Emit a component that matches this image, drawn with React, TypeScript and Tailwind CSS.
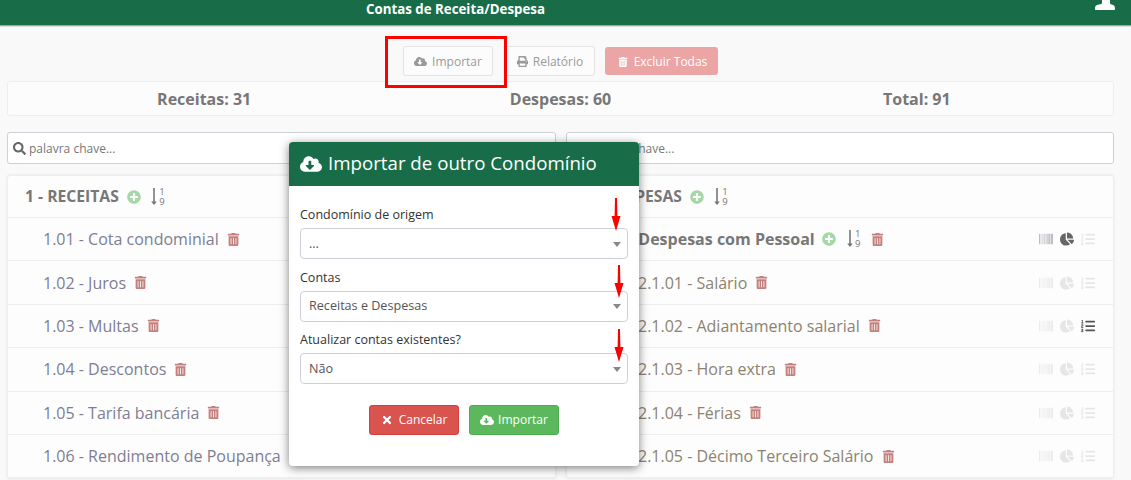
import { FaBarcode, FaChartPie, FaCloudDownloadAlt, FaListOl, FaPlusCircle, FaPrint, FaSearch, FaTimes, FaTrashAlt } from "react-icons/fa";

const receitas = [
  "1.01 - Cota condominial",
  "1.02 - Juros",
  "1.03 - Multas",
  "1.04 - Descontos",
  "1.05 - Tarifa bancária",
  "1.06 - Rendimento de Poupança",
];

const despesas = [
  "2.1.01 - Salário",
  "2.1.02 - Adiantamento salarial",
  "2.1.03 - Hora extra",
  "2.1.04 - Férias",
  "2.1.05 - Décimo Terceiro Salário",
];

function RowTools({ pie = false, list = false, bars = false }: { pie?: boolean; list?: boolean; bars?: boolean }) {
  return (
    <div className="ml-auto flex items-center gap-[7px] pr-[18px] text-[14px]">
      <FaBarcode className={bars ? "text-[#a9a5ad]" : "text-[#e6e6e6]"} />
      <FaChartPie className={pie ? "text-[#666666]" : "text-[#e6e6e6]"} />
      <FaListOl className={list ? "text-[#555555]" : "text-[#e6e6e6]"} />
    </div>
  );
}

// down arrow with 1 over 9, the plain icon sets draw this too heavy
function SortIcon({ className = "" }: { className?: string }) {
  return (
    <span className={`flex items-center text-[#777777] ${className}`}>
      <svg width="6" height="18" viewBox="0 0 6 18">
        <path d="M2.2 0 H3.8 V13.5 H5.8 L3 17 L0.2 13.5 H2.2 Z" fill="currentColor" />
      </svg>
      <span className="ml-[2px] w-[6px] text-center text-[9.5px] leading-[10px] font-normal">
        1<br />9
      </span>
    </span>
  );
}

function Row({ label, color, indent, tools }: { label: string; color: string; indent: string; tools?: React.ReactNode }) {
  return (
    <div className={`flex h-[43.4px] items-center border-b border-[#eeeeee] ${indent}`}>
      <span className={`text-[16px] ${color}`}>{label}</span>
      <FaTrashAlt className="ml-[8px] text-[13px] text-[#c4807c]" />
      {tools}
    </div>
  );
}

function SelectField({ label, value }: { label: string; value: string }) {
  return (
    <div>
      <label className="block pt-px text-[12.5px] leading-[20px] text-[#333333]">{label}</label>
      <div className="mt-[3px] flex h-[31px] items-center justify-between rounded-[4px] border border-[#ccd0d9] bg-white pl-[8px] pr-[6px] pt-px text-[12.6px] text-[#555555]">
        <span>{value}</span>
        <span className="h-0 w-0 border-x-[4px] border-t-[5px] border-x-transparent border-t-[#888888]" />
      </div>
    </div>
  );
}

function RedArrow({ className }: { className: string }) {
  return (
    <svg className={`absolute ${className}`} width="10" height="33" viewBox="0 0 10 33">
      <path d="M4 0 L6 0 L6.4 18 L9.5 18 L5 33 L0.5 18 L3.6 18 Z" fill="#ff0000" />
    </svg>
  );
}

export default function App() {
  return (
    <div className="relative h-[480px] w-[1131px] overflow-hidden bg-[#f9f9f9] font-['Open_Sans',sans-serif] text-[#666666]">
      <header className="relative flex h-[25px] items-start overflow-hidden bg-[#186d48]">
        <h1 className="ml-[366px] text-[13.3px] font-bold leading-[18px] text-white">Contas de Receita/Despesa</h1>
        <svg className="ml-auto mr-[16px]" width="20" height="10" viewBox="0 0 20 10">
          <path d="M7 0 H15 V3 C15 4 16 4.5 18 5 C19.5 5.5 20 6.5 20 9 C20 9.6 19.6 10 19 10 H1 C0.4 10 0 9.6 0 9 C0 6.5 0.5 5.5 2 5 C5 4.5 7 4 7 3 Z" fill="#ffffff" />
        </svg>
      </header>
      <div className="h-[2px] bg-gradient-to-b from-[#8a8a8a] to-[#f9f9f9]" />

      <main className="pl-[7px] pr-[17px]">
        <div className="ml-[396px] mt-[19px] flex h-[30px] items-center text-[12px]">
          <button className="flex h-[30px] w-[90px] items-center justify-center gap-[5px] rounded-[3px] border border-[#e3e3e3] bg-[#fcfcfc] pt-px text-[#9a9a9a]">
            <FaCloudDownloadAlt className="text-[13px]" /> Importar
          </button>
          <button className="ml-[12px] flex h-[30px] w-[90px] items-center justify-center gap-[5px] rounded-[3px] border border-[#e3e3e3] bg-[#fcfcfc] pt-px text-[#9a9a9a]">
            <FaPrint className="text-[11px]" /> Relatório
          </button>
          <button className="ml-[10px] flex h-[28px] w-[113px] items-center justify-center gap-[6px] rounded-[3px] bg-[#eba5a5] pt-px pl-[2px] text-white">
            <FaTrashAlt className="text-[10px]" /> Excluir Todas
          </button>
        </div>

        <div className="mt-[5px] grid h-[35px] grid-cols-3 items-center rounded-[3px] border border-[#eeeeee] bg-[#fcfcfc] px-[18px] text-center text-[16px] font-bold text-[#777777]">
          <span>Receitas: 31</span>
          <span>Despesas: 60</span>
          <span>Total: 91</span>
        </div>

        <div className="mt-[16px] grid grid-cols-[549px_548px] gap-[10px]">
          <section>
            <div className="flex h-[32px] items-center gap-[3px] rounded-[3px] border border-[#ccd0d9] bg-white pl-[5px] pt-px text-[12px] text-[#777777]">
              <FaSearch className="text-[13px] text-[#666666]" /> palavra chave...
            </div>
            <div className="mt-[11px] rounded-[3px] border border-[#eeeeee] bg-[#fdfdfd] shadow-[0_0_3px_rgba(0,0,0,0.08)]">
              <div className="flex h-[42px] items-center border-b border-[#eeeeee] pl-[17px] text-[#777777]">
                <span className="text-[15.7px] font-bold">1 - RECEITAS</span>
                <FaPlusCircle className="ml-[8px] text-[14px] text-[#a6d8a6]" />
                <SortIcon className="ml-[10px]" />
              </div>
              {receitas.map((r) => (
                <Row key={r} label={r} color="text-[#7f7d93]" indent="pl-[35px]" />
              ))}
            </div>
          </section>

          <section>
            <div className="flex h-[32px] items-center gap-[3px] rounded-[3px] border border-[#ccd0d9] bg-white pl-[5px] pt-px text-[12px] text-[#777777]">
              <FaSearch className="text-[13px] text-[#666666]" /> palavra chave...
            </div>
            <div className="mt-[11px] rounded-[3px] border border-[#eeeeee] bg-[#fdfdfd] shadow-[0_0_3px_rgba(0,0,0,0.08)]">
              <div className="flex h-[42px] items-center border-b border-[#eeeeee] pl-[17px] text-[#777777]">
                <span className="text-[15.7px] font-bold">2 - DESPESAS</span>
                <FaPlusCircle className="ml-[8px] text-[14px] text-[#a6d8a6]" />
                <SortIcon className="ml-[10px]" />
              </div>
              <div className="flex h-[43.4px] items-center border-b border-[#eeeeee] pl-[35px]">
                <span className="text-[16px] font-bold text-[#777777]">2.1 - Despesas com Pessoal</span>
                <FaPlusCircle className="ml-[7px] text-[14px] text-[#a6d8a6]" />
                <SortIcon className="ml-[11px]" />
                <FaTrashAlt className="ml-[10px] text-[13px] text-[#c4807c]" />
                <RowTools pie bars />
              </div>
              {despesas.map((d, i) => (
                <Row key={d} label={d} color="text-[#8d8270]" indent="pl-[71px]" tools={<RowTools list={i === 1} />} />
              ))}
            </div>
          </section>
        </div>
      </main>

      {/* annotation drawn over the toolbar */}
      <div className="absolute left-[385px] top-[36px] h-[52px] w-[122px] border-[3px] border-[#ff0000]" />

      <div className="absolute left-[289px] top-[142px] h-[324px] w-[350px] overflow-hidden rounded-[4px] bg-white shadow-[0_2px_10px_rgba(0,0,0,0.5)]">
        <div className="flex h-[44px] items-center gap-[6px] bg-[#186d48] pb-px pl-[11px] text-[18.7px] text-white">
          <FaCloudDownloadAlt className="text-[22px]" />
          <span>Importar de outro Condomínio</span>
        </div>
        <div className="flex flex-col gap-[7.5px] px-[11px] pt-[18px]">
          <SelectField label="Condomínio de origem" value="..." />
          <SelectField label="Contas" value="Receitas e Despesas" />
          <SelectField label="Atualizar contas existentes?" value="Não" />
          <div className="mt-[13px] flex justify-center gap-[10px] text-[12px] text-white">
            <button className="flex h-[30px] w-[90px] items-center justify-center gap-[6px] rounded-[3px] border border-[#d43f3a] bg-[#d9534f] pt-px">
              <FaTimes className="text-[12px]" /> Cancelar
            </button>
            <button className="flex h-[30px] w-[90px] items-center justify-center gap-[4px] rounded-[3px] border border-[#4cae4c] bg-[#5cb85c] pt-px">
              <FaCloudDownloadAlt className="text-[14px]" /> Importar
            </button>
          </div>
        </div>
      </div>

      <RedArrow className="left-[611px] top-[198px]" />
      <RedArrow className="left-[614px] top-[265px]" />
      <RedArrow className="left-[614px] top-[329px]" />
    </div>
  );
}
